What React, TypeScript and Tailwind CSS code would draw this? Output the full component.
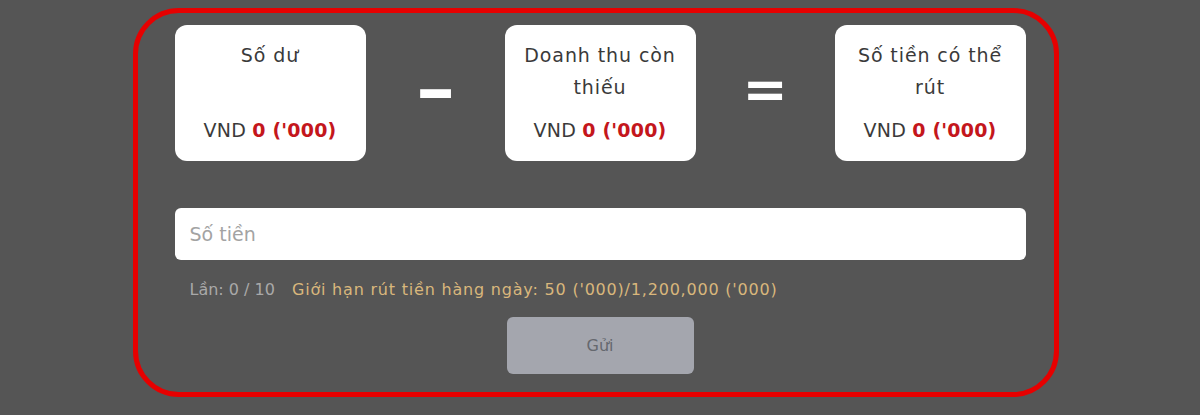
import React from "react";

type Stat = { title: string[]; value: string };

const stats: Stat[] = [
  { title: ["Số dư"], value: "0 ('000)" },
  { title: ["Doanh thu còn", "thiếu"], value: "0 ('000)" },
  { title: ["Số tiền có thể", "rút"], value: "0 ('000)" },
];

function StatCard({ stat }: { stat: Stat }) {
  return (
    <div className="flex h-[136px] w-[191px] flex-col items-center justify-between rounded-[12px] bg-white pb-[15px] pt-[14px] text-center text-[19px] leading-[32px] text-[#3a3a3a]">
      <div className="tracking-[0.9px]">
        {stat.title.map((line) => (
          <div key={line}>{line}</div>
        ))}
      </div>
      <div className="tracking-[0.2px]">
        VND <span className="font-bold text-[#c4161c]">{stat.value}</span>
      </div>
    </div>
  );
}

function Operator({ symbol, wide }: { symbol: string; wide?: boolean }) {
  return (
    <div className="flex flex-1 items-center justify-center self-stretch pb-[6px] text-[54px] font-bold leading-none text-white">
      <span className={wide ? "inline-block scale-x-[1.45] scale-y-[1.3]" : "inline-block"}>{symbol}</span>
    </div>
  );
}

export default function App() {
  return (
    <div className="relative min-h-[415px] bg-[#555555] font-['DejaVu_Sans',sans-serif]">
      <div className="mx-auto w-[851px] pt-[25px]">
        <div className="flex items-start">
          <StatCard stat={stats[0]} />
          <Operator symbol="–" wide />
          <StatCard stat={stats[1]} />
          <Operator symbol="=" />
          <StatCard stat={stats[2]} />
        </div>

        <input
          type="text"
          placeholder="Số tiền"
          className="mt-[47px] block h-[52px] w-full rounded-[6px] bg-white px-[15px] text-[19px] text-[#333] outline-none placeholder:text-[#a3a3a3]"
        />

        <div className="mt-[18px] flex gap-[17px] pl-[15px] text-[16px] leading-[24px]">
          <span className="text-[#a9a9a9]">Lần: 0 / 10</span>
          <span className="tracking-[0.8px] text-[#d9b77c]">
            Giới hạn rút tiền hàng ngày: 50 ('000)/1,200,000 ('000)
          </span>
        </div>

        <div className="mt-[15px] flex justify-center">
          <button
            type="button"
            className="h-[57px] w-[187px] rounded-[6px] bg-[#a4a6ae] text-[16px] font-medium text-[#65686e]"
          >
            Gửi
          </button>
        </div>
      </div>

      {/* highlight ring drawn over the form */}
      <div className="pointer-events-none absolute left-[133px] top-[8px] h-[389px] w-[926px] rounded-[46px] border-[5px] border-[#e60000]" />
    </div>
  );
}
